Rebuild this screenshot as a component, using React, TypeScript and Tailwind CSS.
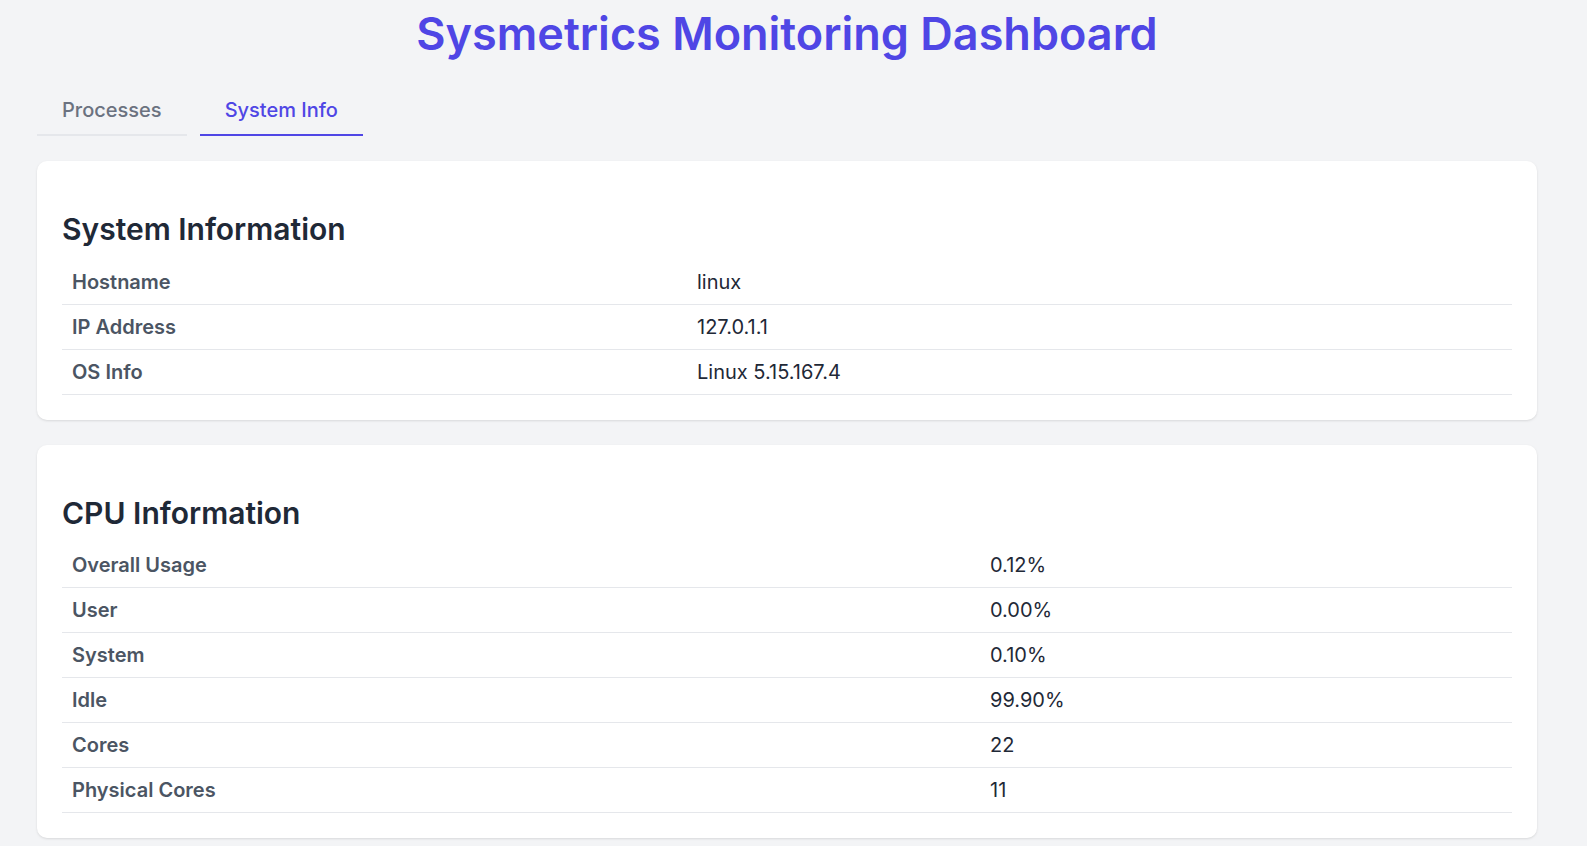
import React from "react";

type Row = [string, string];

const sysRows: Row[] = [
  ["Hostname", "linux"],
  ["IP Address", "127.0.1.1"],
  ["OS Info", "Linux 5.15.167.4"],
];

const cpuRows: Row[] = [
  ["Overall Usage", "0.12%"],
  ["User", "0.00%"],
  ["System", "0.10%"],
  ["Idle", "99.90%"],
  ["Cores", "22"],
  ["Physical Cores", "11"],
];

function InfoCard({ title, rows, labelWidth }: { title: string; rows: Row[]; labelWidth: "sys" | "cpu" }) {
  return (
    <div className="bg-white rounded-[10px] shadow-[0_1px_3px_rgba(0,0,0,0.08),0_1px_2px_rgba(0,0,0,0.04)] px-[25px] pt-[25px] pb-[25px]">
      <h2 className="mt-[25px] text-[30px] leading-[36px] font-semibold text-[#1f2937]">{title}</h2>
      <table className="mt-[12.5px] w-full border-collapse">
        <tbody>
          {rows.map(([k, v]) => (
            <tr key={k} className="border-b border-[#e5e7eb]">
              <td
                className={
                  (labelWidth === "sys" ? "w-[625px] " : "w-[918px] ") +
                  "px-[10px] py-[10px] text-[20px] leading-[24px] font-semibold text-[#4b5563]"
                }
              >
                {k}
              </td>
              <td className="px-[10px] py-[10px] text-[20px] leading-[24px] text-[#1f2937]">{v}</td>
            </tr>
          ))}
        </tbody>
      </table>
    </div>
  );
}

export default function App() {
  return (
    <div className="min-h-screen bg-[#f3f4f6] font-['Inter',sans-serif]">
      <div className="w-[1500px] ml-[37px] pt-[9px] pb-[25px]">
        <h1 className="text-center text-[45px] leading-[50px] font-semibold text-[#4f46e5]">
          Sysmetrics Monitoring Dashboard
        </h1>
        <div className="mt-[27px] flex gap-[13px]">
          <button className="px-[25px] pt-[10px] pb-[10px] text-[20px] leading-[28px] font-medium text-[#6b7280] border-b-2 border-[#e5e7eb]">
            Processes
          </button>
          <button className="px-[25px] pt-[10px] pb-[10px] text-[20px] leading-[28px] font-medium text-[#4f46e5] border-b-2 border-[#4f46e5]">
            System Info
          </button>
        </div>
        <div className="mt-[25px] flex flex-col gap-[25px]">
          <InfoCard title="System Information" rows={sysRows} labelWidth="sys" />
          <InfoCard title="CPU Information" rows={cpuRows} labelWidth="cpu" />
        </div>
      </div>
    </div>
  );
}
